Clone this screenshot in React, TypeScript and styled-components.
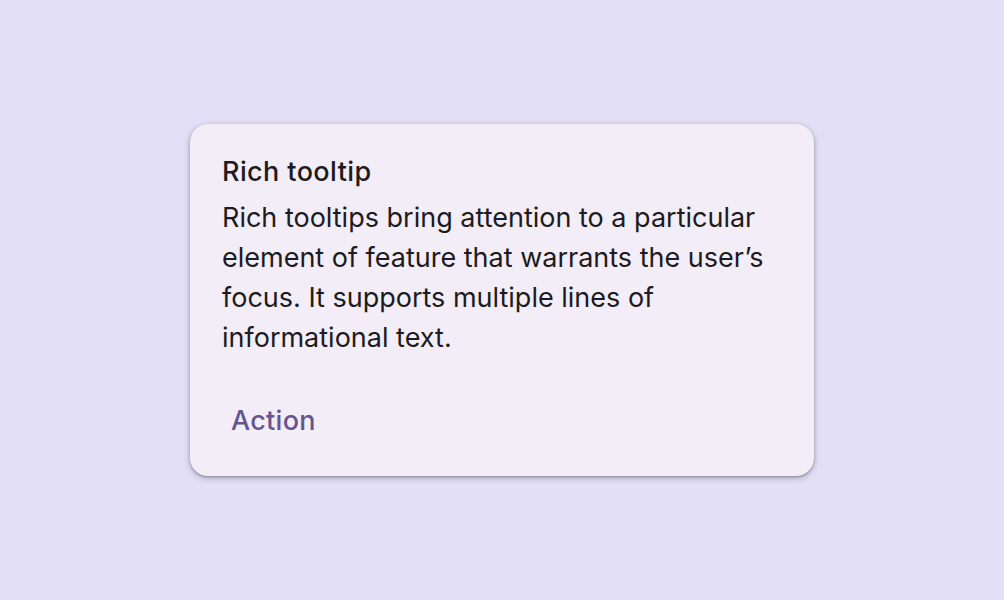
import React from "react";
import styled, { createGlobalStyle } from "styled-components";

const Global = createGlobalStyle`
  html, body { margin: 0; padding: 0; }
  body { background: #E2DFF7; font-family: Inter, "Open Sans", sans-serif; }
`;

const Page = styled.div`
  width: 1004px;
  height: 600px;
  display: flex;
  align-items: flex-start;
  justify-content: flex-start;
  padding: 124px 0 0 190px;
  box-sizing: border-box;
`;

const Card = styled.div`
  width: 624px;
  height: 352px;
  box-sizing: border-box;
  background: #F3EDF7;
  border-radius: 18px;
  box-shadow: 0 2px 6px rgba(0, 0, 0, 0.28), 0 1px 2px rgba(0, 0, 0, 0.22);
  padding: 32px 32px 32px 32px;
  display: flex;
  flex-direction: column;
  align-items: flex-start;
`;

const Title = styled.div`
  font-size: 27px;
  line-height: 32px;
  font-weight: 500;
  letter-spacing: 0.4px;
  color: #1D1B20;
`;

const Body = styled.div`
  margin-top: 10px;
  font-size: 27px;
  line-height: 40px;
  color: #1D1B20;
  width: 570px;
`;

const ActionButton = styled.button`
  margin-top: 38px;
  height: 48px;
  padding: 0 9px;
  border: none;
  background: transparent;
  font-family: inherit;
  font-size: 27px;
  font-weight: 500;
  letter-spacing: 0.3px;
  color: #65558F;
  cursor: pointer;
`;

export default function App() {
  return (
    <>
      <Global />
      <Page>
        <Card>
          <Title>Rich tooltip</Title>
          <Body>
            Rich tooltips bring attention to a particular element of feature that warrants the user’s focus. It supports multiple lines of informational text.
          </Body>
          <ActionButton>Action</ActionButton>
        </Card>
      </Page>
    </>
  );
}
